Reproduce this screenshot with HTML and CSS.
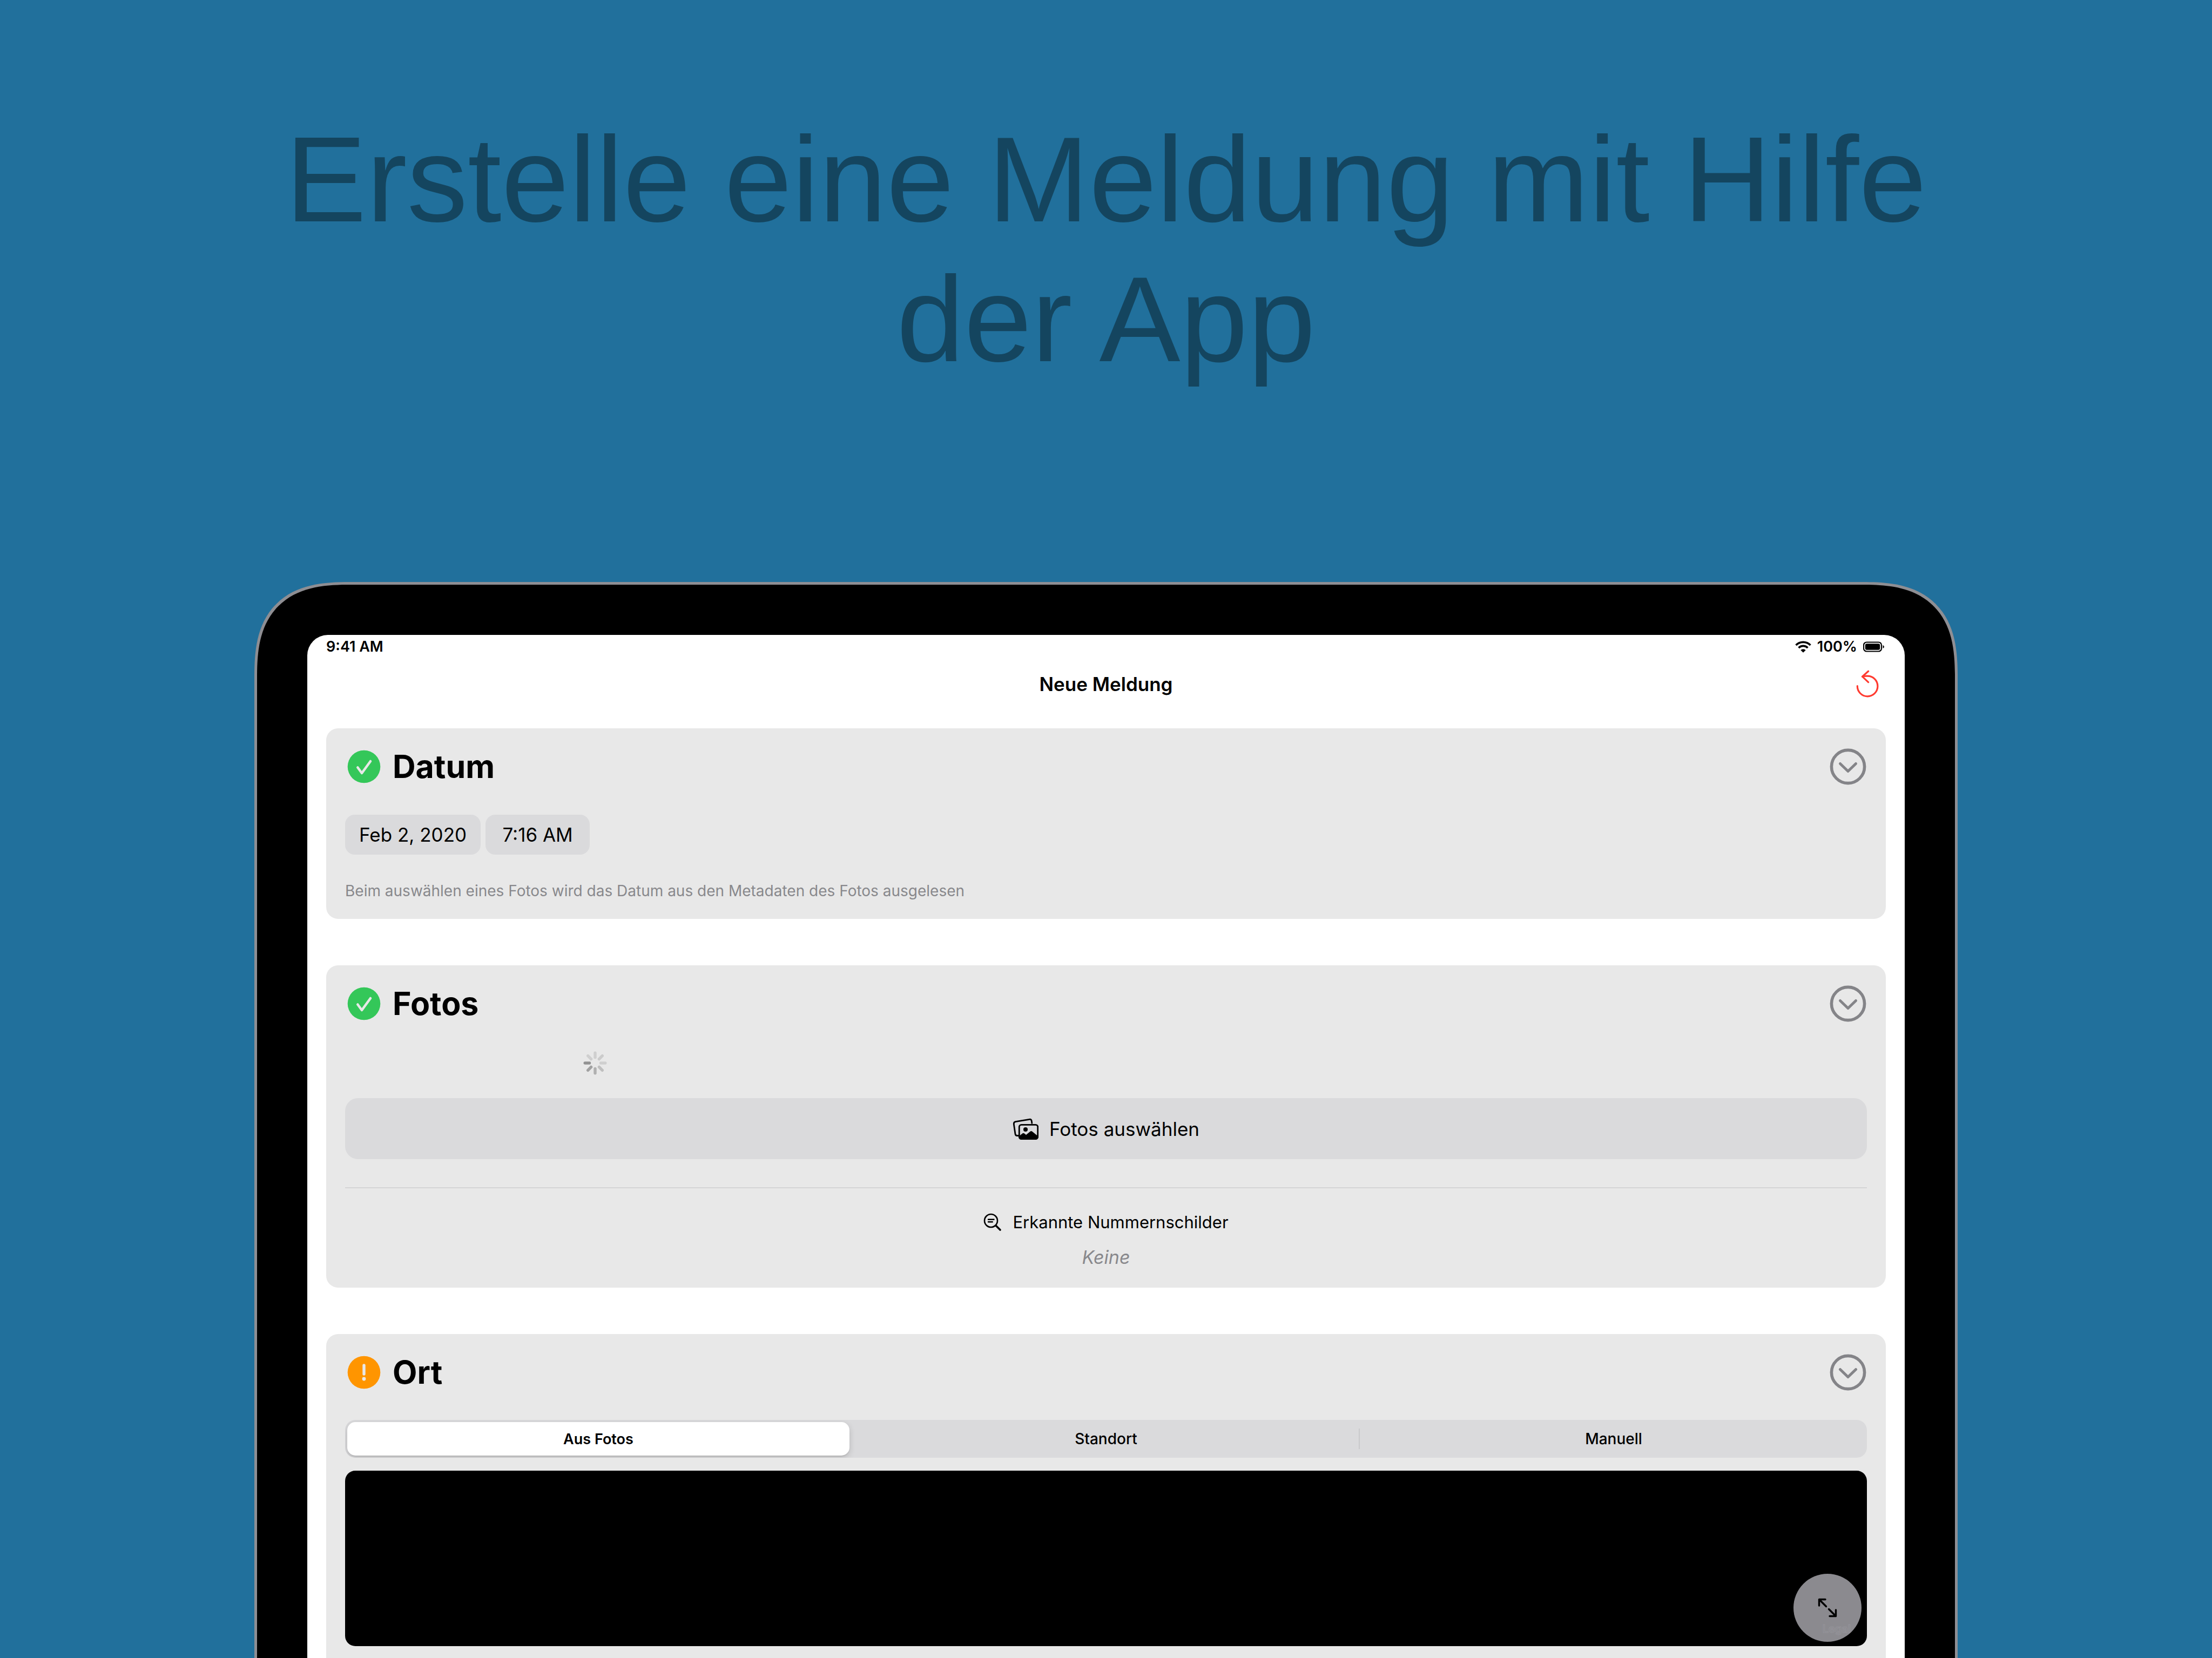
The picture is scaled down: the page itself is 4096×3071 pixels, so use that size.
FILE: index.html
```html
<!DOCTYPE html>
<html lang="de">
<head>
<meta charset="utf-8">
<meta name="viewport" content="width=device-width, initial-scale=1">
<title>Neue Meldung</title>
<link rel="stylesheet" href="styles.css">
</head>
<body>
<svg class="sprite" aria-hidden="true">
  <symbol id="check" viewBox="0 0 68 68">
    <circle cx="34" cy="34" r="30.300" fill="#34c759"/>
    <path d="M22.300 35.500 L30 46 L46 24" fill="none" stroke="#e8e8e8" stroke-width="4.600" stroke-linecap="round" stroke-linejoin="round"/>
  </symbol>
  <symbol id="warn" viewBox="0 0 68 68">
    <circle cx="34" cy="34" r="30.300" fill="#ff9500"/>
    <path d="M34 21 V37" fill="none" stroke="#e8e8e8" stroke-width="5.400" stroke-linecap="round"/>
    <circle cx="34" cy="46" r="3.400" fill="#e8e8e8"/>
  </symbol>
  <symbol id="chevron" viewBox="0 0 68 68">
    <circle cx="34" cy="34" r="30.600" fill="none" stroke="#848488" stroke-width="5.600"/>
    <path d="M19.500 28.500 L34 42.500 L48.500 28.500" fill="none" stroke="#848488" stroke-width="5" stroke-linecap="round" stroke-linejoin="round"/>
  </symbol>
</svg>

<header class="hero">
  <h1 class="hero-title">Erstelle eine Meldung mit Hilfe<br>der App</h1>
</header>

<div class="device">
  <main class="screen">
    <div class="status">
      <span class="status-text">9:41 AM</span>
      <div class="status-right">
        <svg class="wifi" viewBox="0 0 30 22" aria-hidden="true">
          <path d="M1.600 8 A19 19 0 0 1 28.400 8" fill="none" stroke="#000" stroke-width="3.800"/>
          <path d="M6.600 12.900 A11.800 11.800 0 0 1 23.400 12.900" fill="none" stroke="#000" stroke-width="3.600"/>
          <path d="M15 21.800 L10.300 17.200 A6.600 6.600 0 0 1 19.700 17.200 Z" fill="#000"/>
        </svg>
        <span class="status-text">100%</span>
        <svg class="battery" viewBox="0 0 40 20" aria-hidden="true">
          <rect x="1" y="1.500" width="33" height="17" rx="5.500" fill="none" stroke="#000" stroke-width="2.200"/>
          <rect x="3.800" y="4.300" width="27.400" height="11.400" rx="3" fill="#000"/>
          <path d="M36.500 7 Q39 8 39 10 Q39 12 36.500 13 Z" fill="#000"/>
        </svg>
      </div>
    </div>

    <div class="nav">
      <h2 class="nav-title">Neue Meldung</h2>
      <button class="icon-button" type="button" aria-label="Zurücksetzen">
        <svg class="reset" viewBox="0 0 44 52" aria-hidden="true">
          <path d="M3.300 29.500 A18.800 18.800 0 1 0 22 11.200 Q17 11 12.500 12.200" fill="none" stroke="#ff3b30" stroke-width="3.200" stroke-linecap="round"/>
          <path d="M23.600 2.200 L12.500 12.200 L23.600 22.600" fill="none" stroke="#ff3b30" stroke-width="3.200" stroke-linecap="round" stroke-linejoin="round"/>
        </svg>
      </button>
    </div>

    <div class="cards">
      <section class="card">
        <div class="card-head">
          <svg class="badge" aria-hidden="true"><use href="#check"/></svg>
          <h3 class="card-title">Datum</h3>
          <button class="icon-button" type="button" aria-label="Datum einklappen"><svg class="badge"><use href="#chevron"/></svg></button>
        </div>
        <div class="pills">
          <button class="pill" type="button">Feb 2, 2020</button>
          <button class="pill" type="button">7:16 AM</button>
        </div>
        <p class="hint">Beim auswählen eines Fotos wird das Datum aus den Metadaten des Fotos ausgelesen</p>
      </section>

      <section class="card">
        <div class="card-head">
          <svg class="badge" aria-hidden="true"><use href="#check"/></svg>
          <h3 class="card-title">Fotos</h3>
          <button class="icon-button" type="button" aria-label="Fotos einklappen"><svg class="badge"><use href="#chevron"/></svg></button>
        </div>
        <div class="photo-grid">
          <svg class="spinner" viewBox="-22 -22 44 44" role="img" aria-label="Lädt">
            <g fill="none" stroke-width="5.400" stroke-linecap="round">
              <path d="M0 -10.500 V-18.800" stroke="#cfcfcf"/>
              <path d="M0 -10.500 V-18.800" stroke="#cbcbcb" transform="rotate(45)"/>
              <path d="M0 -10.500 V-18.800" stroke="#cfcfcf" transform="rotate(90)"/>
              <path d="M0 -10.500 V-18.800" stroke="#bfbfbf" transform="rotate(135)"/>
              <path d="M0 -10.500 V-18.800" stroke="#b0b0b0" transform="rotate(180)"/>
              <path d="M0 -10.500 V-18.800" stroke="#a1a1a1" transform="rotate(225)"/>
              <path d="M0 -10.500 V-18.800" stroke="#929292" transform="rotate(270)"/>
              <path d="M0 -10.500 V-18.800" stroke="#cfcfcf" transform="rotate(315)"/>
            </g>
          </svg>
        </div>
        <button class="wide-button" type="button">
          <svg class="photos" viewBox="0 0 48 40" aria-hidden="true">
            <path d="M11 32.500 H8.500 Q5.500 32.500 5 29.500 L2.300 11 Q2 7.500 5.300 6.700 L31 2.300 Q34.500 1.700 35.200 5 L36 10.500" fill="none" stroke="#000" stroke-width="2.800" stroke-linejoin="round"/>
            <rect x="12.300" y="12.300" width="34.400" height="26.400" rx="4" fill="none" stroke="#000" stroke-width="2.800"/>
            <circle cx="24" cy="21" r="4" fill="#000"/>
            <path d="M12.500 33 L18.500 28.300 Q20 27 21.500 28.300 L25 31 L33 24.500 Q34.500 23.300 36 24.500 L46.500 33 V36 Q46 38.500 43.500 38.500 H15.500 Q12.500 38.500 12.500 36 Z" fill="#000"/>
          </svg>
          Fotos auswählen
        </button>
        <hr class="rule">
        <div class="plates">
          <svg class="lens" viewBox="0 0 34 34" aria-hidden="true">
            <circle cx="14" cy="14" r="12" fill="none" stroke="#000" stroke-width="2.600"/>
            <path d="M23 23 L31 31" stroke="#000" stroke-width="3.600" stroke-linecap="round"/>
            <path d="M9 11.700 H19.500 M9 16.200 H16.800" stroke="#000" stroke-width="2.400" stroke-linecap="round"/>
          </svg>
          <span>Erkannte Nummernschilder</span>
        </div>
        <p class="none">Keine</p>
      </section>

      <section class="card card-last">
        <div class="card-head">
          <svg class="badge" aria-hidden="true"><use href="#warn"/></svg>
          <h3 class="card-title">Ort</h3>
          <button class="icon-button" type="button" aria-label="Ort einklappen"><svg class="badge"><use href="#chevron"/></svg></button>
        </div>
        <div class="segments" role="group" aria-label="Quelle des Orts">
          <button class="segment segment-on" type="button" aria-pressed="true">Aus Fotos</button>
          <button class="segment" type="button" aria-pressed="false">Standort</button>
          <button class="segment segment-line" type="button" aria-pressed="false">Manuell</button>
        </div>
        <div class="map">
          <button class="expand" type="button" aria-label="Karte vergrößern">
            <svg class="arrows" viewBox="0 0 36 36" aria-hidden="true">
              <g fill="none" stroke="#000" stroke-width="3.400" stroke-linecap="round" stroke-linejoin="round">
                <path d="M2.500 14 V2.500 H14 M2.500 2.500 L15.500 15.500"/>
                <path d="M33.500 22 V33.500 H22 M33.500 33.500 L20.500 20.500"/>
              </g>
            </svg>
          </button>
          <a class="legal" href="#legal">Legal</a>
        </div>
      </section>
    </div>
  </main>
</div>
</body>
</html>
```
FILE: styles.css
```css
* {
  box-sizing: border-box;
  margin: 0;
}

body {
  display: flex;
  flex-direction: column;
  min-height: 100vh;
  background: #21709c;
  color: #000;
  font-family: Inter, "Liberation Sans", sans-serif;
}

button {
  padding: 0;
  border: 0;
  background: none;
  color: inherit;
  font: inherit;
}

svg {
  display: block;
}

.sprite {
  position: absolute;
  width: 0;
  height: 0;
}

.hero {
  padding: 203px 64px 357px;
  text-align: center;
}

.hero-title {
  color: #14455f;
  font: 400 225px/259px "Liberation Sans", Arial, sans-serif;
}

.device {
  display: flex;
  flex: 1;
  flex-direction: column;
  margin: 0 471px;
  padding: 93px 93px 0;
  border: 5px solid #8e8e93;
  border-bottom: 0;
  border-radius: 140px 140px 0 0;
  background: #000;
}

@supports (corner-shape: squircle) {
  .device {
    border-radius: 176px 176px 0 0;
    corner-shape: superellipse(1.4);
  }
}

.screen {
  display: flex;
  flex: 1;
  flex-direction: column;
  padding: 0 35px;
  border-radius: 38px 38px 0 0;
  background: #fff;
}

.status {
  display: flex;
  align-items: center;
  justify-content: space-between;
  height: 44px;
}

.status-text {
  font-size: 27px;
  font-weight: 600;
  line-height: 44px;
}

.status-right {
  display: flex;
  align-items: center;
  gap: 11px;
  padding-right: 2px;
}

.wifi {
  width: 30px;
  height: 22px;
}

.battery {
  width: 40px;
  height: 20px;
}

.nav {
  display: grid;
  grid-template-columns: 1fr auto 1fr;
  align-items: center;
  height: 94px;
}

.nav-title {
  grid-column: 2;
  font-size: 35px;
  font-weight: 600;
  line-height: 44px;
}

.nav .icon-button {
  justify-self: end;
  margin-right: 12px;
}

.reset {
  width: 44px;
  height: 52px;
}

.cards {
  display: flex;
  flex: 1;
  flex-direction: column;
  gap: 86px;
  padding-top: 35px;
}

.card {
  padding: 35px;
  border-radius: 22px;
  background: #e8e8e8;
}

.card-last {
  flex: 1;
  padding-bottom: 20px;
  border-radius: 22px 22px 0 0;
}

.card-head {
  display: flex;
  align-items: center;
  gap: 19px;
  height: 72px;
  padding: 0 1px;
}

.badge {
  width: 68px;
  height: 68px;
}

.card-title {
  flex: 1;
  font-size: 59px;
  font-weight: 700;
  line-height: 72px;
}

.pills {
  display: flex;
  gap: 9px;
  margin-top: 53px;
}

.pill {
  min-width: 193px;
  height: 74px;
  padding: 0 26px;
  border-radius: 18px;
  background: #dadadc;
  font-size: 35px;
}

.hint {
  margin-top: 50px;
  color: #88888c;
  font-size: 28px;
  line-height: 34px;
}

.photo-grid {
  display: grid;
  grid-template-columns: repeat(3, 1fr);
  gap: 20px;
  justify-items: center;
  margin-top: 52px;
}

.spinner {
  width: 44px;
  height: 44px;
}

.wide-button {
  display: flex;
  align-items: center;
  justify-content: center;
  gap: 20px;
  width: 100%;
  height: 113px;
  margin-top: 43px;
  border-radius: 24px;
  background: #dadadc;
  font-size: 35px;
}

.photos {
  width: 48px;
  height: 40px;
}

.rule {
  height: 2px;
  margin-top: 52px;
  border: 0;
  background: #d5d5d6;
}

.plates {
  display: flex;
  align-items: center;
  justify-content: center;
  gap: 20px;
  margin-top: 43px;
  font-size: 31px;
  line-height: 40px;
}

.lens {
  width: 34px;
  height: 34px;
}

.none {
  margin-top: 24px;
  color: #88888c;
  font-size: 34px;
  font-style: italic;
  line-height: 42px;
  text-align: center;
}

.segments {
  display: grid;
  grid-template-columns: repeat(3, 1fr);
  gap: 10px;
  height: 70px;
  margin-top: 52px;
  padding: 4px;
  border-radius: 19px;
  background: #dadadc;
  overflow: hidden;
}

.segment {
  position: relative;
  border-radius: 15px;
  font-size: 28px;
  font-weight: 500;
}

.segment-on {
  background: #fff;
  box-shadow: 0 4px 12px rgba(0, 0, 0, 0.16), 0 2px 2px rgba(0, 0, 0, 0.06);
  font-size: 27px;
  font-weight: 600;
}

.segment-line::before {
  position: absolute;
  top: 12px;
  bottom: 12px;
  left: -7px;
  width: 2px;
  background: #c9c9cc;
  content: "";
}

.map {
  position: relative;
  height: 325px;
  margin-top: 24px;
  border-radius: 19px;
  background: #000;
}

.expand {
  position: absolute;
  right: 10px;
  bottom: 8px;
  display: grid;
  width: 126px;
  height: 126px;
  place-items: center;
  border-radius: 50%;
  background: #8b8a8f;
}

.arrows {
  width: 36px;
  height: 36px;
}

.legal {
  position: absolute;
  right: 30px;
  bottom: 20px;
  color: #8b8a8f;
  font-size: 20px;
  font-weight: 600;
  line-height: 24px;
  text-decoration: none;
  -webkit-text-stroke: 1px #95949a;
}
```
